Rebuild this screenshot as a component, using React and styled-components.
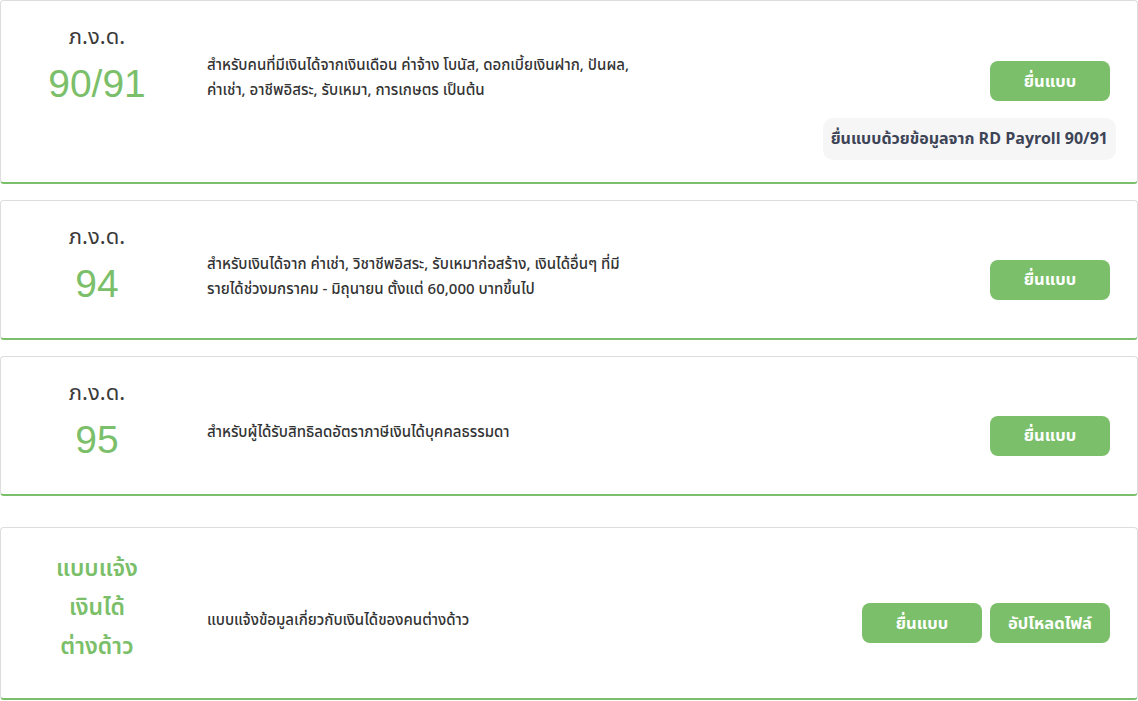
import React from 'react'
import styled, { createGlobalStyle } from 'styled-components'

const GlobalStyle = createGlobalStyle`
  body {
    margin: 0;
    background: #fff;
    font-family: "Noto Sans Thai", "Noto Sans", "Liberation Sans", sans-serif;
    color: #333;
  }
`

const green = '#7bbf6a'

const List = styled.div`
  display: flex;
  flex-direction: column;
`

const Card = styled.div`
  display: flex;
  align-items: ${p => (p.$top ? 'flex-start' : 'center')};
  background: #fff;
  border: 1px solid #ddd;
  border-bottom: 2px solid ${green};
  border-radius: 4px;
  padding: 20px 20px ${p => (p.$top ? '22px' : '0')} 0;
  margin-bottom: ${p => p.$gap ?? 16}px;
`

const Side = styled.div`
  width: 192px;
  flex-shrink: 0;
  display: flex;
  flex-direction: column;
  align-items: center;
  padding-top: ${p => p.$pt || 0}px;
  padding-bottom: ${p => p.$pb || 25}px;
`

const FormLabel = styled.div`
  font-size: 22px;
  line-height: 34px;
  color: #3a3a3a;
`

const FormNumber = styled.div`
  font-family: "Liberation Sans", Arial, sans-serif;
  font-size: 39px;
  line-height: 58px;
  color: ${green};
`

const GreenTitle = styled.div`
  font-size: 23px;
  line-height: 39px;
  font-weight: 600;
  color: ${green};
  text-align: center;
`

const Body = styled.div`
  flex: 1;
  display: flex;
  flex-direction: column;
  gap: 12px;
  padding-left: 14px;
  padding-top: ${p => (p.$top ? '35px' : '0')};
`

const MainRow = styled.div`
  display: flex;
  align-items: center;
  justify-content: space-between;
`

const Desc = styled.p`
  margin: 0;
  font-size: 15px;
  line-height: 25px;
  font-weight: 500;
  color: #333;
  white-space: nowrap;
  transform: translateY(-3px);
`

const Actions = styled.div`
  display: flex;
  gap: 8px;
  padding-right: 7px;
`

const Button = styled.button`
  width: 120px;
  height: 40px;
  border: none;
  border-radius: 8px;
  background: ${green};
  color: #fff;
  font-family: inherit;
  font-size: 16.5px;
  font-weight: 700;
  cursor: pointer;
`

const ExtraRow = styled.div`
  display: flex;
  justify-content: flex-end;
`

const Pill = styled.div`
  background: #f6f6f7;
  border-radius: 10px;
  padding: 0 8px;
  margin-right: 1px;
  height: 42px;
  display: flex;
  align-items: center;
  font-size: 16px;
  font-weight: 700;
  color: #3d4456;
`

const forms = [
  {
    label: 'ภ.ง.ด.',
    number: '90/91',
    desc: [
      'สำหรับคนที่มีเงินได้จากเงินเดือน ค่าจ้าง โบนัส, ดอกเบี้ยเงินฝาก, ปันผล,',
      'ค่าเช่า, อาชีพอิสระ, รับเหมา, การเกษตร เป็นต้น',
    ],
    extra: 'ยื่นแบบด้วยข้อมูลจาก RD Payroll 90/91',
  },
  {
    label: 'ภ.ง.ด.',
    number: '94',
    desc: [
      'สำหรับเงินได้จาก ค่าเช่า, วิชาชีพอิสระ, รับเหมาก่อสร้าง, เงินได้อื่นๆ ที่มี',
      'รายได้ช่วงมกราคม - มิถุนายน ตั้งแต่ 60,000 บาทขึ้นไป',
    ],
  },
  {
    label: 'ภ.ง.ด.',
    number: '95',
    desc: ['สำหรับผู้ได้รับสิทธิลดอัตราภาษีเงินได้บุคคลธรรมดา'],
    gap: 31,
  },
]

const Lines = ({ lines }) => (
  <Desc>
    {lines.map((l, i) => (
      <React.Fragment key={i}>
        {i > 0 && <br />}
        {l}
      </React.Fragment>
    ))}
  </Desc>
)

export default function App() {
  return (
    <>
      <GlobalStyle />
      <List>
        {forms.map(f => (
          <Card key={f.number} $top={!!f.extra} $gap={f.gap}>
            <Side>
              <FormLabel>{f.label}</FormLabel>
              <FormNumber>{f.number}</FormNumber>
            </Side>
            <Body $top={!!f.extra}>
              <MainRow>
                <Lines lines={f.desc} />
                <Actions>
                  <Button>ยื่นแบบ</Button>
                </Actions>
              </MainRow>
              {f.extra && (
                <ExtraRow>
                  <Pill>{f.extra}</Pill>
                </ExtraRow>
              )}
            </Body>
          </Card>
        ))}
        <Card $gap={0}>
          <Side $pt={2} $pb={31}>
            <GreenTitle>แบบแจ้ง<br />เงินได้<br />ต่างด้าว</GreenTitle>
          </Side>
          <Body>
            <MainRow>
              <Lines lines={['แบบแจ้งข้อมูลเกี่ยวกับเงินได้ของคนต่างด้าว']} />
              <Actions>
                <Button>ยื่นแบบ</Button>
                <Button>อัปโหลดไฟล์</Button>
              </Actions>
            </MainRow>
          </Body>
        </Card>
      </List>
    </>
  )
}
